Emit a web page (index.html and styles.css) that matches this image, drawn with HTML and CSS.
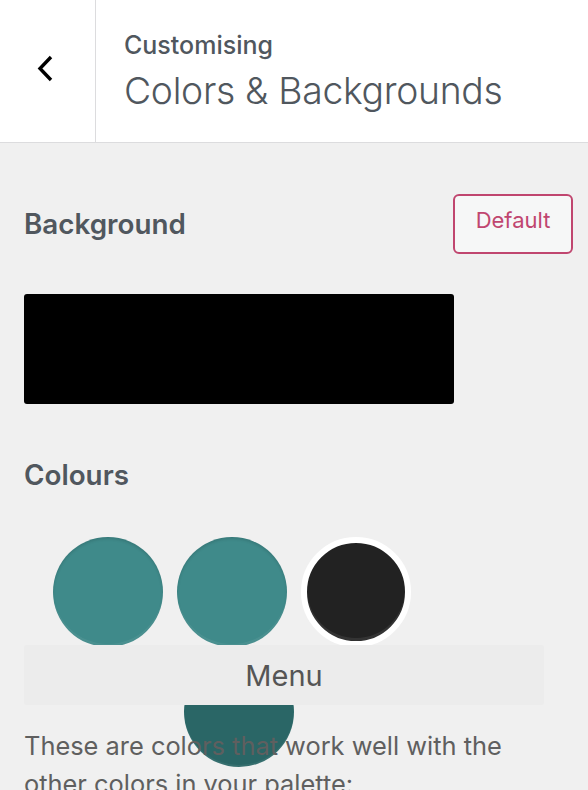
FILE: index.html
```html
<!DOCTYPE html>
<html lang="en">
<head>
<meta charset="utf-8">
<title>Colors &amp; Backgrounds</title>
<link rel="stylesheet" href="styles.css">
</head>
<body>
<header class="topbar">
  <button class="back" aria-label="Back">
    <svg width="20" height="30" viewBox="0 0 20 30" aria-hidden="true">
      <path d="M15 3 L4 14.5 L15 26" fill="none" stroke="#000" stroke-width="3.4" stroke-linecap="butt" stroke-linejoin="miter"/>
    </svg>
  </button>
  <div class="titles">
    <span class="crumb">Customising</span>
    <h1 class="title">Colors &amp; Backgrounds</h1>
  </div>
</header>

<main class="panel">
  <div class="row-head">
    <h2 class="label">Background</h2>
    <button class="default-btn">Default</button>
  </div>
  <div class="bg-preview"></div>

  <h2 class="label colours-label">Colours</h2>

  <div class="palette">
    <div class="swatches">
      <span class="swatch teal"></span>
      <span class="swatch teal"></span>
      <span class="swatch dark selected"></span>
    </div>
    <span class="swatch teal-drag"></span>
    <div class="menu-bar">Menu</div>
    <p class="note">These are colors that work well with the other colors in your palette:</p>
  </div>
</main>
</body>
</html>
```

FILE: styles.css
```css
* { box-sizing: border-box; }

html, body {
  margin: 0;
  padding: 0;
  height: 100%;
  overflow: hidden;
}

body {
  background: #f0f0f0;
  font-family: Inter, "Noto Sans", "Liberation Sans", sans-serif;
  color: #50575e;
}

.topbar {
  display: flex;
  height: 143px;
  background: #fff;
  border-bottom: 1px solid #dcdcde;
}

.back {
  width: 96px;
  flex: none;
  display: flex;
  align-items: center;
  justify-content: center;
  padding: 0 4px 4px 0;
  background: none;
  border: 0;
  border-right: 1px solid #dcdcde;
}

.titles {
  display: flex;
  flex-direction: column;
  justify-content: center;
  padding: 0 0 0 28px;
}

.crumb {
  font-size: 25px;
  font-weight: 500;
  line-height: 30px;
  color: #50575e;
}

.title {
  margin: 9px 0 0;
  font-size: 37.3px;
  font-weight: 300;
  line-height: 44px;
  color: #50575e;
  letter-spacing: -0.3px;
}

.panel {
  padding: 51px 15px 0 24px;
}

.row-head {
  display: flex;
  justify-content: space-between;
  align-items: center;
}

.label {
  margin: 0;
  font-size: 27.8px;
  font-weight: 600;
  color: #50575e;
}

.default-btn {
  width: 120px;
  height: 60px;
  border: 2px solid #c0466f;
  border-radius: 6px;
  background: #f6f7f7;
  color: #c0466f;
  font-family: inherit;
  font-size: 22px;
  padding: 0 0 8px;
}

.bg-preview {
  width: 430px;
  height: 110px;
  margin-top: 40px;
  background: #000;
  border-radius: 3px;
}

.colours-label {
  margin-top: 54px;
}

.palette {
  position: relative;
  margin-top: 45px;
}

.swatches {
  display: flex;
  gap: 14px;
  padding-left: 29px;
}

.swatch {
  display: block;
  width: 110px;
  height: 110px;
  border-radius: 50%;
}

.teal {
  background: #3f8a8a;
  box-shadow: inset 0 2px 3px rgba(0, 0, 0, 0.12), inset 0 -3px 0 rgba(255, 255, 255, 0.06);
}

.dark {
  background: #222;
  border: 6px solid #fff;
  box-shadow: inset 0 -3px 0 rgba(255, 255, 255, 0.08);
}

.teal-drag {
  position: absolute;
  left: 160px;
  top: 120px;
  background: #2a6666;
  box-shadow: inset 0 -2px 0 rgba(255, 255, 255, 0.06);
}

.menu-bar {
  position: absolute;
  left: 0;
  top: 108px;
  width: 520px;
  height: 60px;
  background: #ececec;
  border-radius: 2px;
  display: flex;
  align-items: center;
  justify-content: center;
  font-size: 29px;
  color: #555;
}

.note {
  position: relative;
  max-width: 520px;
  margin: 80px 0 0;
  font-size: 25.4px;
  line-height: 38px;
  color: #5f5f5f;
}
```
